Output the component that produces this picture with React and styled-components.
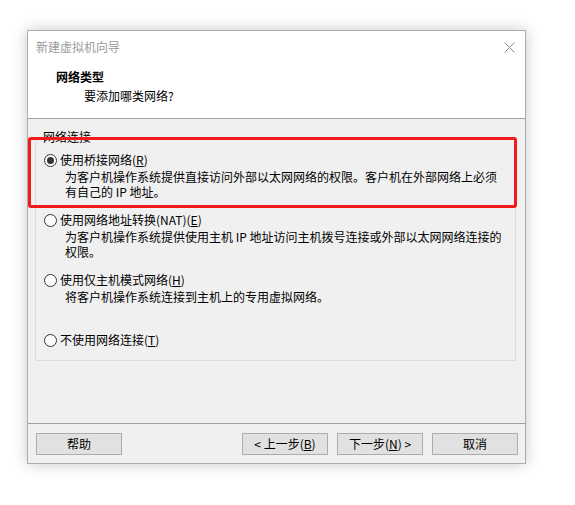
import React, { useState } from 'react';
import styled, { createGlobalStyle } from 'styled-components';

const GlobalStyle = createGlobalStyle`
  html, body {
    margin: 0;
    padding: 0;
    background: #ffffff;
  }
  body {
    font-family: "Noto Sans CJK SC", "Noto Sans", sans-serif;
    font-size: 12px;
    color: #000;
  }
`;

const options = [
  {
    id: 'bridged',
    label: '使用桥接网络',
    key: 'R',
    desc: ['为客户机操作系统提供直接访问外部以太网网络的权限。客户机在外部网络上必须', '有自己的 IP 地址。'],
  },
  {
    id: 'nat',
    label: '使用网络地址转换(NAT)',
    key: 'E',
    desc: ['为客户机操作系统提供使用主机 IP 地址访问主机拨号连接或外部以太网网络连接的', '权限。'],
  },
  {
    id: 'hostonly',
    label: '使用仅主机模式网络',
    key: 'H',
    desc: ['将客户机操作系统连接到主机上的专用虚拟网络。'],
  },
  {
    id: 'none',
    label: '不使用网络连接',
    key: 'T',
    desc: [],
  },
];

const App = () => {
  const [selected, setSelected] = useState('bridged');

  return (
    <Page>
      <GlobalStyle />
      <Window>
        <Header>
          <TitleBar>
            <Title>新建虚拟机向导</Title>
            <CloseButton aria-label="关闭">
              <svg width="11" height="11" viewBox="0 0 11 11">
                <path d="M0.5 0.5 L10.5 10.5 M10.5 0.5 L0.5 10.5" stroke="#8a8a8a" strokeWidth="1" fill="none" />
              </svg>
            </CloseButton>
          </TitleBar>
          <Heading>网络类型</Heading>
          <SubHeading>要添加哪类网络?</SubHeading>
        </Header>

        <Body>
          <GroupBox>
            <Legend>网络连接</Legend>
            {options.map((opt) => (
              <Option key={opt.id} onClick={() => setSelected(opt.id)}>
                <OptionRow>
                  <Radio checked={selected === opt.id} />
                  <span>
                    {opt.label}(<u>{opt.key}</u>)
                  </span>
                </OptionRow>
                {opt.desc.length > 0 && (
                  <Desc>
                    {opt.desc.map((line, i) => (
                      <div key={i}>{line}</div>
                    ))}
                  </Desc>
                )}
              </Option>
            ))}
          </GroupBox>
          <Highlight />
        </Body>

        <Footer>
          <Button>帮助</Button>
          <Spacer />
          <Button>&lt; 上一步(<u>B</u>)</Button>
          <Button>下一步(<u>N</u>) &gt;</Button>
          <Button>取消</Button>
        </Footer>
      </Window>
    </Page>
  );
};

export default App;

const Page = styled.div`
  padding: 30px 0 0 27px;
  height: 505px;
  box-sizing: border-box;
`;

const Window = styled.div`
  width: 499px;
  height: 434px;
  box-sizing: border-box;
  border: 1px solid #acacac;
  box-shadow: 0 0 14px rgba(0, 0, 0, 0.22);
  display: flex;
  flex-direction: column;
  background: #f0f0f0;
`;

const Header = styled.div`
  background: #ffffff;
  height: 88px;
  box-sizing: border-box;
  border-bottom: 1px solid #a0a0a0;
`;

const TitleBar = styled.div`
  height: 32px;
  display: flex;
  align-items: center;
  justify-content: space-between;
  padding: 0 9px 0 8px;
`;

const Title = styled.div`
  color: #9a9a9a;
  line-height: 16px;
`;

const CloseButton = styled.div`
  width: 11px;
  height: 11px;
  display: flex;
  margin-right: 1px;
`;

const Heading = styled.div`
  font-weight: bold;
  line-height: 16px;
  margin: 6px 0 0 28px;
`;

const SubHeading = styled.div`
  line-height: 16px;
  margin: 3px 0 0 56px;
`;

const Body = styled.div`
  flex: 1;
  position: relative;
  padding: 11px 9px 0 7px;
`;

const GroupBox = styled.fieldset`
  margin: 0;
  padding: 8px 8px 0 8px;
  height: 231px;
  box-sizing: border-box;
  border: 1px solid #dcdcdc;
  min-width: 0;
`;

const Legend = styled.legend`
  padding: 0 1px;
  margin-left: -2px;
  line-height: 14px;
  color: #000;
`;

const Option = styled.div`
  height: 60px;
  cursor: default;
`;

const OptionRow = styled.div`
  display: flex;
  align-items: center;
  gap: 3px;
  height: 16px;
  line-height: 16px;
`;

const Radio = styled.span`
  width: 13px;
  height: 13px;
  box-sizing: border-box;
  border-radius: 50%;
  border: 1px solid #333;
  background: #fff;
  display: flex;
  align-items: center;
  justify-content: center;

  &::after {
    content: '';
    width: 7px;
    height: 7px;
    border-radius: 50%;
    background: ${(props) => (props.checked ? '#333' : 'transparent')};
  }
`;

const Desc = styled.div`
  margin: 1px 0 0 21px;
  line-height: 15px;
`;

const Highlight = styled.div`
  position: absolute;
  left: 0;
  top: 18px;
  width: 489px;
  height: 71px;
  box-sizing: border-box;
  border: 3px solid #f21b1b;
  border-radius: 3px;
  pointer-events: none;
`;

const Footer = styled.div`
  border-top: 1px solid #a0a0a0;
  display: flex;
  gap: 9px;
  padding: 9px 7px 8px 8px;
`;

const Spacer = styled.div`
  flex: 1;
`;

const Button = styled.button`
  width: 86px;
  height: 22px;
  box-sizing: border-box;
  border: 1px solid #adadad;
  background: #e1e1e1;
  font-family: inherit;
  font-size: 12px;
  color: #000;
  padding: 0;
  line-height: 18px;
  border-radius: 0;
`;
